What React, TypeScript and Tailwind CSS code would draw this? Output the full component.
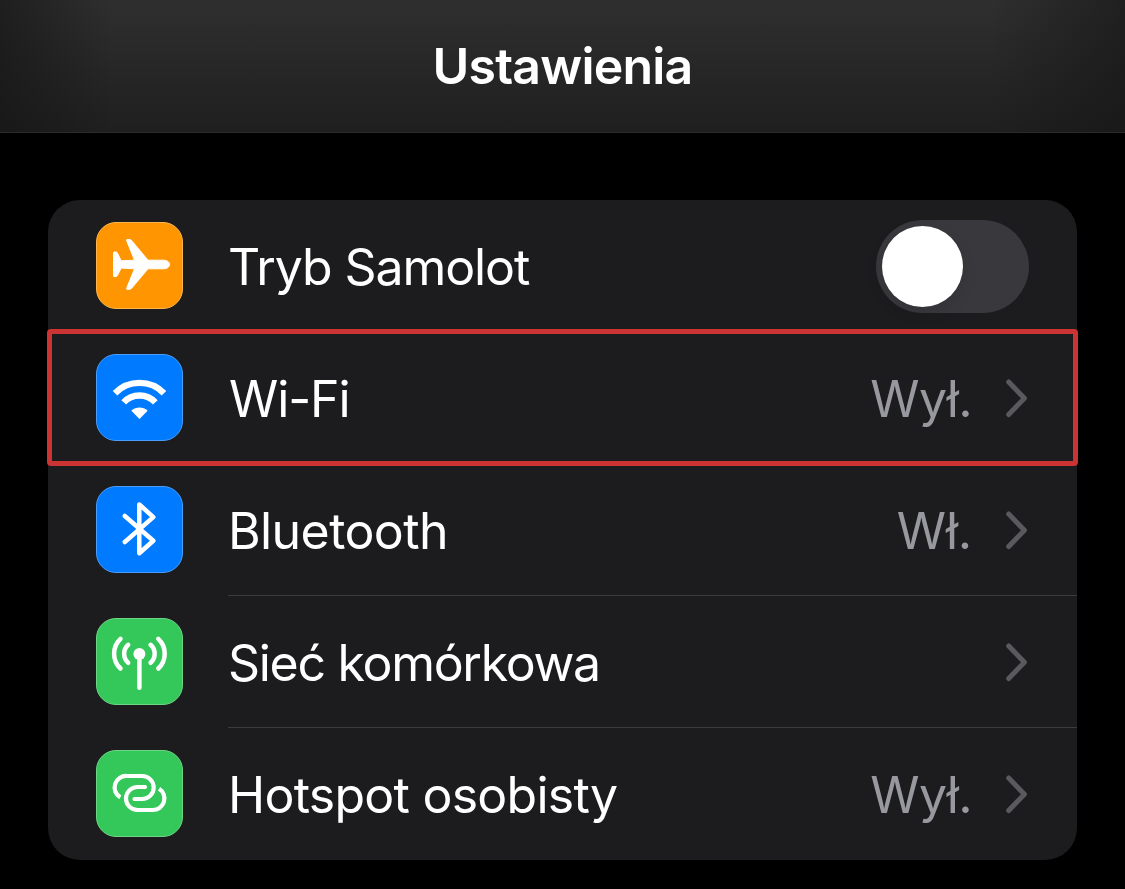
import React from "react";

interface SettingsItem {
	id: string;
	label: string;
	value?: string;
	tileClass: string;
	labelClass: string;
	valueClass?: string;
	icon: React.ReactNode;
	toggle?: boolean;
	highlighted?: boolean;
	separator?: boolean;
}

const AirplaneIcon = () => (
	<path
		fill="white"
		stroke="white"
		strokeWidth="1"
		strokeLinejoin="round"
		d="M17.5 30.5Q17.5 30 18 30H20Q20.8 30 21.2 30.7L25.2 38.8L38.5 38.2L30.6 18.5Q30.2 17.5 31 17.5H33.5Q34.8 17.5 35.6 18.5L52 38.2H67.5C71 38.2 73.6 40.2 73.6 42.4C73.6 44.8 71 46.8 67.5 46.8H52L35.6 66.3Q34.8 67.3 33.5 67.3H31Q30.2 67.3 30.6 66.3L38.5 46.8L25.2 46.1L21.2 53.8Q20.8 54.5 20 54.5H18Q17.5 54.5 17.5 54Z"
	/>
);

const WifiIcon = () => (
	<g fill="none" stroke="white" strokeWidth="6.4">
		<path d="M19 39.2A34.3 34.3 0 0 1 68 39.2" />
		<path d="M27.7 48.4A21.5 21.5 0 0 1 59.3 48.4" />
		<path fill="white" stroke="none" d="M35.4 56.8A11.7 11.7 0 0 1 51.6 56.8L43.5 65Z" />
	</g>
);

const BluetoothIcon = () => (
	<path
		fill="none"
		stroke="white"
		strokeWidth="4.5"
		strokeLinecap="round"
		strokeLinejoin="round"
		d="M28.8 30L57.3 54.7L43.3 67.2V18.4L57.3 31.1L28.8 56"
	/>
);

const CellularIcon = () => (
	<g fill="none" stroke="white" strokeWidth="4.5" strokeLinecap="round">
		<circle cx="43.4" cy="36" r="6" fill="white" stroke="none" />
		<path d="M43.4 38V69.8" />
		<path d="M24.5 20.9A20.3 20.3 0 0 0 24.5 50.5" />
		<path d="M62.3 20.9A20.3 20.3 0 0 1 62.3 50.5" />
		<path d="M32.2 26.8A12 12 0 0 0 32.2 44.8" />
		<path d="M54.6 26.8A12 12 0 0 1 54.6 44.8" />
	</g>
);

const HotspotIcon = () => (
	<g fill="none" stroke="white" strokeWidth="4.2">
		<path d="M24.3 47.4A11.5 11.5 0 0 1 31 26H46.2A11.5 11.5 0 0 1 46.2 49H38.5" />
		<path d="M49.5 37H41.5A11.5 11.5 0 0 0 41.5 60H56.4A11.5 11.5 0 0 0 63.1 38.8" />
		<path strokeLinecap="round" d="M38.5 49H40M48 37H49" />
	</g>
);

const items: SettingsItem[] = [
	{
		id: "airplane",
		label: "Tryb Samolot",
		tileClass: "bg-[#ff9500] border-[#ffb54c]",
		labelClass: "tracking-[-1.1px]",
		icon: <AirplaneIcon />,
		toggle: true,
	},
	{
		id: "wifi",
		label: "Wi-Fi",
		value: "Wył.",
		tileClass: "bg-[#007aff] border-[#4a9dfa]",
		labelClass: "pl-px tracking-[-1.1px]",
		valueClass: "tracking-[-0.6px]",
		icon: <WifiIcon />,
		highlighted: true,
	},
	{
		id: "bluetooth",
		label: "Bluetooth",
		value: "Wł.",
		tileClass: "bg-[#007aff] border-[#4a9dfa]",
		labelClass: "tracking-[-0.6px]",
		valueClass: "tracking-[-0.2px]",
		icon: <BluetoothIcon />,
		separator: true,
	},
	{
		id: "cellular",
		label: "Sieć komórkowa",
		tileClass: "bg-[#34c759] border-[#6cd686]",
		labelClass: "tracking-[-1.3px]",
		icon: <CellularIcon />,
		separator: true,
	},
	{
		id: "hotspot",
		label: "Hotspot osobisty",
		value: "Wył.",
		tileClass: "bg-[#34c759] border-[#6cd686]",
		labelClass: "tracking-[-0.75px]",
		valueClass: "tracking-[-0.6px]",
		icon: <HotspotIcon />,
	},
];

const Chevron = () => (
	<svg className="ml-[31px] h-[42px] w-[26px]" viewBox="0 0 26 42" fill="none">
		<path
			d="M5.7 5L21.4 21.3L5.7 37.5"
			stroke="#5a5a5e"
			strokeWidth="5"
			strokeLinecap="round"
			strokeLinejoin="round"
		/>
	</svg>
);

const Toggle = () => (
	<button
		role="switch"
		aria-checked="false"
		className="mt-px h-[93px] w-[153px] rounded-full bg-[#39393d] p-1.5"
	>
		<span className="block size-[81px] rounded-full bg-white shadow-[0_6px_16px_rgba(0,0,0,0.1)]" />
	</button>
);

const SettingsRow: React.FC<{ item: SettingsItem }> = ({ item }) => (
	<li className="relative flex h-[132px] pl-12">
		<div className={`mt-[22px] size-[87px] shrink-0 rounded-[20px] border ${item.tileClass}`}>
			<svg className="-m-px size-[87px]" viewBox="0 0 87 87">
				{item.icon}
			</svg>
		</div>
		<div
			className={`ml-[45px] flex flex-1 items-center pr-12 ${
				item.separator ? "border-b border-[#3b3b3e]" : ""
			}`}
		>
			<span className={`whitespace-nowrap pt-0.5 text-[50px] leading-[60px] text-white ${item.labelClass}`}>
				{item.label}
			</span>
			<div className="ml-auto flex items-center">
				{item.value && (
					<span className={`pt-0.5 text-[50px] leading-[60px] text-[#98989f] ${item.valueClass}`}>
						{item.value}
					</span>
				)}
				{item.toggle ? <Toggle /> : <Chevron />}
			</div>
		</div>
		{item.highlighted && (
			<div className="absolute -inset-x-px -top-[3px] -bottom-[2px] rounded-[4px] border-[5px] border-[#cc3333]" />
		)}
	</li>
);

export default function App() {
	return (
		<div className="h-[889px] w-full overflow-hidden bg-black font-['Inter',sans-serif]">
			<header className="flex h-[133px] items-center justify-center border-b border-[#2c2c2d] bg-[linear-gradient(90deg,rgba(20,20,20,0.6),transparent_10%,transparent_88%,rgba(20,20,20,0.55)),linear-gradient(180deg,#2f2f30,#1f1f20)]">
				<h1 className="text-[50px] leading-[60px] font-semibold tracking-[-0.8px] text-white">
					Ustawienia
				</h1>
			</header>
			<main className="px-12 pt-[67px]">
				<ul className="rounded-[32px] bg-[#1c1c1e]">
					{items.map((item) => (
						<SettingsRow key={item.id} item={item} />
					))}
				</ul>
			</main>
		</div>
	);
}
